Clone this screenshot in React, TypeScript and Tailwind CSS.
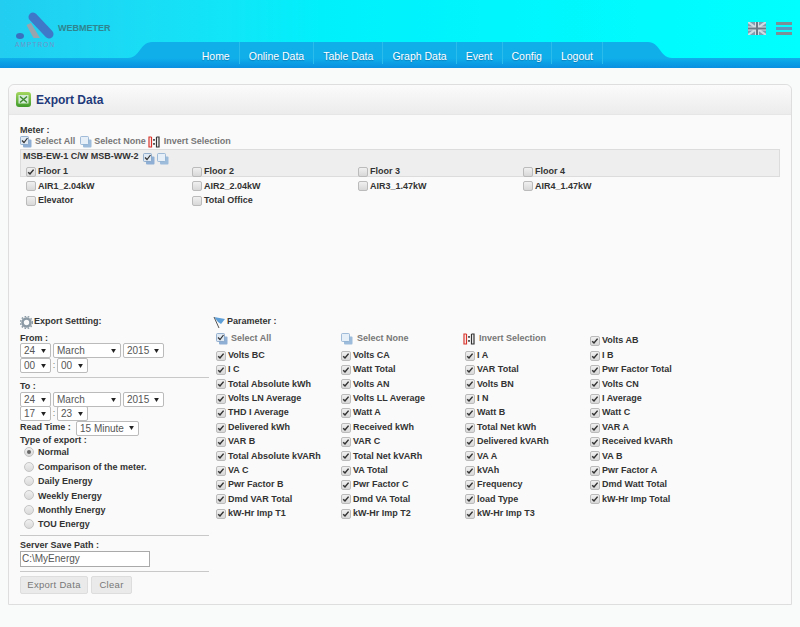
import React from "react";

const meterRows = [
  ["AIR1_2.04kW", "AIR2_2.04kW", "AIR3_1.47kW", "AIR4_1.47kW"],
  ["Elevator", "Total Office"],
];

const parameters = [
  "Volts BC", "Volts CA", "I A", "I B",
  "I C", "Watt Total", "VAR Total", "Pwr Factor Total",
  "Total Absolute kWh", "Volts AN", "Volts BN", "Volts CN",
  "Volts LN Average", "Volts LL Average", "I N", "I Average",
  "THD I Average", "Watt A", "Watt B", "Watt C",
  "Delivered kWh", "Received kWh", "Total Net kWh", "VAR A",
  "VAR B", "VAR C", "Delivered kVARh", "Received kVARh",
  "Total Absolute kVARh", "Total Net kVARh", "VA A", "VA B",
  "VA C", "VA Total", "kVAh", "Pwr Factor A",
  "Pwr Factor B", "Pwr Factor C", "Frequency", "Dmd Watt Total",
  "Dmd VAR Total", "Dmd VA Total", "load Type", "kW-Hr Imp Total",
  "kW-Hr Imp T1", "kW-Hr Imp T2", "kW-Hr Imp T3",
];

const navItems = ["Home", "Online Data", "Table Data", "Graph Data", "Event", "Config", "Logout"];

const exportTypes = ["Normal", "Comparison of the meter.", "Daily Energy", "Weekly Energy", "Monthly Energy", "TOU Energy"];

const Check = ({ checked = false }: { checked?: boolean }) => (
  <span className="w-[10px] h-[10px] shrink-0 rounded-[2px] border border-[#bbbbbb] bg-gradient-to-b from-[#f0f0f0] to-[#d8d8d8] flex items-center justify-center">
    {checked && (
      <svg width="8" height="8" viewBox="0 0 8 8">
        <path d="M1.2 4.2 L3 6 L6.6 1.6" fill="none" stroke="#333" strokeWidth="1.5" />
      </svg>
    )}
  </span>
);

const Radio = ({ checked = false }: { checked?: boolean }) => (
  <span className="w-[10px] h-[10px] shrink-0 -mt-[2px] rounded-full border border-[#c4c4c4] bg-gradient-to-b from-[#f0f0f0] to-[#dadada] flex items-center justify-center">
    {checked && <span className="w-[4px] h-[4px] rounded-full bg-[#666]" />}
  </span>
);

const Select = ({ value, w }: { value: string; w: string }) => (
  <span className={`${w} h-[15px] bg-white border border-[#bbbbbb] rounded-[2px] flex items-center justify-between pl-[3px] pr-[4px] text-[10px] text-[#555] font-normal`}>
    <span>{value}</span>
    <svg width="5" height="4" viewBox="0 0 6 5">
      <path d="M0 0 H6 L3 5 Z" fill="#222" />
    </svg>
  </span>
);

const SelectAllIcon = () => (
  <svg width="12" height="12" viewBox="0 0 12 12" className="shrink-0">
    <rect x="3" y="3.5" width="8.5" height="8" rx="1" fill="#8fb0d4" />
    <rect x="0.5" y="0.5" width="8" height="8" rx="1" fill="#dfe9f4" stroke="#7f9fc4" strokeWidth="0.8" />
    <path d="M2 4.5 L4 6.5 L7.5 2" fill="none" stroke="#333" strokeWidth="1.2" />
  </svg>
);

const SelectNoneIcon = () => (
  <svg width="12" height="12" viewBox="0 0 12 12" className="shrink-0">
    <rect x="3" y="3.5" width="8.5" height="8" rx="1" fill="#9dbcdc" />
    <rect x="0.5" y="0.5" width="8" height="8" rx="1" fill="#e6eef7" stroke="#8aaccf" strokeWidth="0.8" />
  </svg>
);

const InvertIcon = () => (
  <svg width="12" height="12" viewBox="0 0 12 12" className="shrink-0">
    <path d="M3.5 1 H1 V11 H3.5 V1" fill="none" stroke="#d8342c" strokeWidth="1.2" />
    <path d="M8.5 1 H11 V11 H8.5 V1" fill="none" stroke="#333" strokeWidth="1.2" />
    <rect x="5.2" y="3" width="1.6" height="1.8" fill="#333" />
    <rect x="5.2" y="7" width="1.6" height="1.8" fill="#333" />
  </svg>
);

const Logo = () => (
  <svg width="42" height="29" viewBox="0 0 42 29" className="shrink-0">
    <path d="M18 5 L34 22" stroke="#3f78c8" strokeWidth="9" strokeLinecap="round" />
    <path d="M11.5 13 L18.5 26 H25 L16 11 Z" fill="#9aa4ac" />
    <ellipse cx="5" cy="24" rx="4" ry="3" fill="#3a70c0" />
  </svg>
);

const Flag = () => (
  <svg width="18" height="13" viewBox="0 0 18 13">
    <rect width="18" height="13" fill="#7f9cb0" />
    <path d="M0 0 L18 13 M18 0 L0 13" stroke="#cfdbe2" strokeWidth="2.2" />
    <path d="M9 0 V13 M0 6.5 H18" stroke="#d4dee4" strokeWidth="4" />
    <path d="M9 0 V13 M0 6.5 H18" stroke="#6c7a88" strokeWidth="2" />
  </svg>
);

const TabCurve = ({ flip = false }: { flip?: boolean }) => (
  <svg width="24" height="16" viewBox="0 0 24 16" className={flip ? "-scale-x-100" : ""}>
    <path d="M0 16 C12 16 12 0 24 0 V16 Z" fill="#10afea" />
  </svg>
);

export default function App() {
  return (
    <div className="w-[800px] h-[627px] overflow-hidden bg-[#f9fafa] font-['Liberation_Sans',Arial,sans-serif] text-[#333]">
      <header className="bg-gradient-to-r from-[#22cdf0] via-[#00f0fb] via-40% to-[#00ffff]">
        <div className="flex h-[58px]">
          <div className="w-[128px] pl-[15px] pt-[12px] flex items-start">
            <div className="flex flex-col items-start">
              <Logo />
              <span className="text-[6.5px] leading-[6px] tracking-[1.1px] text-[#6f93c8] mt-[1px]">AMPTRON</span>
            </div>
            <span className="text-[9px] leading-[12px] font-bold text-[#2f8490] ml-[1px] mt-[10px]">WEBMETER</span>
          </div>
          <div className="flex-1 flex items-end">
            <TabCurve />
            <nav className="relative z-10 flex-1 h-[16px] bg-[#10afea] flex justify-end pr-[45px]">
              {navItems.map((item) => (
                <a key={item} className="h-[22px] px-[9px] pt-[8px] border-r border-[#2bbcec] text-[10.5px] leading-[13px] text-white [text-shadow:0_1px_1px_rgba(0,60,120,0.4)]">
                  {item}
                </a>
              ))}
            </nav>
            <TabCurve flip />
          </div>
          <div className="w-[128px] flex items-start justify-end gap-[10px] pr-[8px] pt-[22px]">
            <Flag />
            <div className="w-[16px] h-[13px] flex flex-col justify-between">
              <span className="h-[3px] bg-[#7b8f96]" />
              <span className="h-[3px] bg-[#5d97bd]" />
              <span className="h-[3px] bg-[#7b8f96]" />
            </div>
          </div>
        </div>
        <div className="h-[10px] bg-gradient-to-b from-[#10afea] to-[#0a8fe0]" />
      </header>

      <main className="pt-[16px] px-[8px]">
        <section className="h-[521px] border border-[#dedede] rounded-t-[6px] bg-[#fafafa] flex flex-col">
          <div className="h-[30px] shrink-0 rounded-t-[6px] border-b border-[#e6e6e6] bg-gradient-to-b from-[#fbfbfb] to-[#ececec] flex items-center gap-[5px] pl-[7px]">
            <svg width="15" height="15" viewBox="0 0 15 15">
              <defs>
                <linearGradient id="xl" x1="0" y1="0" x2="0" y2="1">
                  <stop offset="0" stopColor="#a5d860" />
                  <stop offset="1" stopColor="#3f9a2a" />
                </linearGradient>
              </defs>
              <rect x="0" y="0" width="15" height="15" rx="3" fill="url(#xl)" />
              <rect x="2.5" y="3" width="10" height="8.5" fill="#d5ecd8" />
              <path d="M4 4.5 L11 10.5 M11 4.5 L4 10.5" stroke="#3f8a30" strokeWidth="1.5" />
            </svg>
            <h1 className="text-[12px] font-bold text-[#1f3a7a]">Export Data</h1>
          </div>

          <div className="flex-1 pt-[10px] pl-[11px] pr-[10px] text-[9px] font-bold">
            <div className="leading-[10px]">Meter :</div>
            <div className="flex items-center h-[13px] text-[#777]">
              <SelectAllIcon />
              <span className="ml-[3px]">Select All</span>
              <span className="ml-[5px]"><SelectNoneIcon /></span>
              <span className="ml-[2px]">Select None</span>
              <span className="ml-[2px]"><InvertIcon /></span>
              <span className="ml-[4px]">Invert Selection</span>
            </div>

            <div className="h-[28px] mt-[1px] w-[760px] -mr-[10px] bg-[#eeeeee] border border-[#dcdcdc]">
              <div className="flex items-center h-[15px] pl-[2px] pb-[2px]">
                <span>MSB-EW-1 C/W MSB-WW-2</span>
                <span className="flex items-center gap-[2px] ml-[4px] mt-[5px]">
                  <SelectAllIcon />
                  <SelectNoneIcon />
                </span>
              </div>
              <div className="grid grid-cols-[166px_166px_165px_165px] pl-[5px]">
                {["Floor 1", "Floor 2", "Floor 3", "Floor 4"].map((f, i) => (
                  <label key={f} className="flex items-center gap-[2px] h-[13px]">
                    <Check checked={i === 0} />
                    <span>{f}</span>
                  </label>
                ))}
              </div>
            </div>

            <div className="grid grid-cols-[166px_166px_165px_165px] pl-[6px] h-[138px] content-start pt-[2px]">
              {meterRows.flat().map((m) => (
                <label key={m} className="flex items-center gap-[2px] h-[14.5px]">
                  <Check />
                  <span>{m}</span>
                </label>
              ))}
            </div>

            <div className="flex">
              <div className="w-[189px] shrink-0">
                <div className="flex items-center gap-[1px] h-[14px]">
                  <svg width="13" height="13" viewBox="0 0 13 13">
                    <circle cx="6.5" cy="6.5" r="4" fill="none" stroke="#8b9aa5" strokeWidth="2.6" />
                    <circle cx="6.5" cy="6.5" r="6" fill="none" stroke="#8b9aa5" strokeWidth="1.4" strokeDasharray="1.6 1.6" />
                  </svg>
                  <span>Export Settting:</span>
                </div>
                <div className="leading-[10px] mt-[4px]">From :</div>
                <div className="flex gap-[2px]">
                  <Select value="24" w="w-[31px]" />
                  <Select value="March" w="w-[68px]" />
                  <Select value="2015" w="w-[41px]" />
                </div>
                <div className="flex items-center">
                  <Select value="00" w="w-[31px]" />
                  <span className="w-[6px] text-center font-normal text-[#777]">:</span>
                  <Select value="00" w="w-[31px]" />
                </div>
                <div className="border-t border-[#c8c8c8] mt-[4px]" />
                <div className="leading-[10px] mt-[3px]">To :</div>
                <div className="flex gap-[2px] mt-[1px]">
                  <Select value="24" w="w-[31px]" />
                  <Select value="March" w="w-[68px]" />
                  <Select value="2015" w="w-[41px]" />
                </div>
                <div className="flex items-center -mt-[1px]">
                  <Select value="17" w="w-[31px]" />
                  <span className="w-[6px] text-center font-normal text-[#777]">:</span>
                  <Select value="23" w="w-[31px]" />
                </div>
                <div className="flex items-center h-[14px]">
                  <span className="w-[56px]">Read Time :</span>
                  <Select value="15 Minute" w="w-[63px]" />
                </div>
                <div className="leading-[10px]">Type of export :</div>
                <div className="pl-[4px] mt-[1px]">
                  {exportTypes.map((t, i) => (
                    <label key={t} className="flex items-center gap-[4px] h-[14.4px]">
                      <Radio checked={i === 0} />
                      <span>{t}</span>
                    </label>
                  ))}
                </div>
                <div className="border-t border-[#c8c8c8] mt-[3px]" />
                <div className="leading-[10px] mt-[4px]">Server Save Path :</div>
                <div className="w-[130px] h-[16px] mt-[1px] bg-white border border-[#aaaaaa] pl-[1px] text-[10px] leading-[14px] font-normal text-[#555]">C:\MyEnergy</div>
                <div className="border-t border-[#c8c8c8] mt-[4px]" />
                <div className="flex gap-[3px] mt-[4px]">
                  <button className="h-[18px] w-[68px] rounded-[2px] border border-[#dddddd] bg-[#eaeaea] text-[9.5px] font-normal tracking-[0.3px] text-[#777]">Export Data</button>
                  <button className="h-[18px] w-[41px] rounded-[2px] border border-[#dddddd] bg-[#eaeaea] text-[9.5px] font-normal tracking-[0.3px] text-[#777]">Clear</button>
                </div>
              </div>

              <div className="flex-1 ml-[7px]">
                <div className="flex items-center gap-[1px] h-[14px] -ml-[3px]">
                  <svg width="13" height="13" viewBox="0 0 13 13">
                    <path d="M1 1 L12 3 L8 8 L5 6 Z" fill="#5f9fd8" />
                    <path d="M1 1 L6 12" stroke="#555" strokeWidth="1" />
                  </svg>
                  <span>Parameter :</span>
                </div>
                <div className="grid grid-cols-[125px_124px_125px_120px] mt-[5px]">
                  <div className="flex items-center gap-[3px] h-[14.4px] pb-[5px] text-[#777]"><SelectAllIcon /><span>Select All</span></div>
                  <div className="flex items-center gap-[4px] h-[14.4px] pb-[5px] text-[#777]"><SelectNoneIcon /><span>Select None</span></div>
                  <div className="flex items-center gap-[4px] h-[14.4px] pb-[4px] -ml-[2px] text-[#777]"><InvertIcon /><span>Invert Selection</span></div>
                  <label className="flex items-center gap-[2px] h-[14.4px]"><Check checked /><span>Volts AB</span></label>
                  {parameters.map((p) => (
                    <label key={p} className="flex items-center gap-[2px] h-[14.4px]">
                      <Check checked />
                      <span>{p}</span>
                    </label>
                  ))}
                </div>
              </div>
            </div>
          </div>
        </section>
      </main>
    </div>
  );
}
